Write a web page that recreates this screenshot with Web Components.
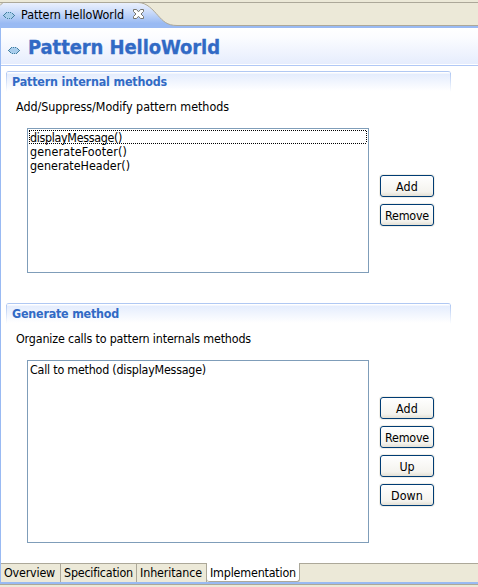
<!DOCTYPE html>
<html lang="en"><head><meta charset="utf-8"><title>Pattern HelloWorld</title>
<style>html,body{margin:0;width:478px;height:587px;overflow:hidden;background:#ece9d8;font:12.4px/14px "DejaVu Sans Condensed","DejaVu Sans","Noto Sans",sans-serif;color:#000}</style></head>
<body><pattern-editor></pattern-editor>
<script>
const define=(name,html,setup)=>customElements.define(name,class extends HTMLElement{
  connectedCallback(){
    if(this.shadowRoot)return;
    this.attachShadow({mode:'open'}).innerHTML=html;
    if(setup)setup(this,this.shadowRoot);
  }
});

// Text whose tracking is adjusted to fill the width given in "w".
define('fit-text','<style>:host{display:inline-block;white-space:nowrap;flex:none}span{display:inline-block}</style><span><slot></slot></span>',(el,r)=>{
  const s=r.querySelector('span'),w=+el.getAttribute('w');
  const n=r.querySelector('slot').assignedNodes({flatten:true}).map(t=>t.textContent).join('').length;
  s.style.letterSpacing=((w-s.getBoundingClientRect().width)/n).toFixed(3)+'px';
  el.style.width=w+'px';
});

define('pattern-icon',`<style>:host{display:block;width:12px;height:7px;flex:none}svg{display:block}</style>
<svg width="12" height="7" viewBox="0 0 12 7" shape-rendering="crispEdges"><path d="M3 0h6v1h1v1h1v1h1v1h-1v1h-1v1h-1v1h-6v-1h-1v-1h-1v-1h-1v-1h1v-1h1v-1h1z" fill="#a9cdec"/><path d="M3 .5h1M5 .5h1M7 .5h1M2 1.5h1M9 1.5h1M1 2.5h1M10 2.5h1M0 3.5h1M11 3.5h1M1 4.5h1M10 4.5h1M2 5.5h1M9 5.5h1M4 6.5h1M6 6.5h1M8 6.5h1" stroke="#437f9f"/></svg>`);

define('editor-tab',`<style>
:host{display:grid;height:28px;grid-template-columns:478px}
svg,.c{grid-area:1/1}svg{display:block}
.c{display:flex;align-items:flex-start}
pattern-icon{margin:12px 6px 0 3px}fit-text{margin-top:8px}.x{margin:9px 0 0 9px}
</style>
<svg width="478" height="28" viewBox="0 0 478 28"><defs><linearGradient id="g" x1="0" y1="3" x2="0" y2="27" gradientUnits="userSpaceOnUse"><stop offset="0" stop-color="#eaf0fd"/><stop offset=".3" stop-color="#d2e0fb"/><stop offset=".85" stop-color="#99baf3"/><stop offset="1" stop-color="#99baf3"/></linearGradient></defs>
<path d="M0 2.5H478" stroke="#aca899"/><rect y="26" width="478" height="2" fill="#99baf3"/>
<path d="M0 28V5L3 3H138C147 3 153 10 158 15.5S167 25.5 177 25.5V28Z" fill="url(#g)"/>
<path d="M0 5.5L3 2.5H138C147 2.5 153 10 158 15.5S167 25.5 177 25.5H478" fill="none" stroke="#aca899"/></svg>
<div class="c"><pattern-icon></pattern-icon><fit-text w="103"><slot></slot></fit-text>
<svg class="x" width="11" height="11" viewBox="0 0 11 11"><path d="M.5.5H3.5L5.5 2.8L7.5.5H10.5V2.5L8 5L10.5 7.5V9.5H7.5L5.5 7.3L3.5 9.5H.5V7.5L3 5L.5 2.5Z" fill="#fff" stroke="#77766f"/></svg></div>`);

define('form-heading',`<style>
:host{display:flex;box-sizing:border-box;height:38px;background:linear-gradient(#fff 0,#fbfcff 25%,#e6edfd 36px,#fff 36px,#fff 37px,#b0c8f6 37px)}
pattern-icon{margin:19px 8px 0 7px}fit-text{font-weight:bold;font-size:20px;line-height:24px;color:#316ac5;margin-top:7px;-webkit-text-stroke:.3px #316ac5}
</style><pattern-icon></pattern-icon><fit-text w="192"><slot></slot></fit-text>`);

define('form-section',`<style>
:host{display:block;height:232px;margin-left:5px}
header{position:relative;width:445px;height:20px;box-sizing:border-box;border-radius:3px 3px 0 0;border-top:1px solid #b0c8f3;background:linear-gradient(#fff 1px,#e5edfd 2px,#fff 19px);display:flex;padding:3px 0 0 6px;color:#316ac5;font-weight:bold}
header::before,header::after{content:"";position:absolute;top:1px;width:1px;height:19px;background:linear-gradient(#b0c8f3,#fff)}
header::before{left:0}header::after{right:0}
.d{display:flex;padding:9px 0 0 10px;height:37px;box-sizing:border-box}
.b{display:flex;padding-left:21px;gap:11px}
</style><header><slot name="title"></slot></header><div class="d"><slot name="desc"></slot></div><div class="b"><slot></slot></div>`);

define('list-box',`<style>:host{display:block;box-sizing:border-box;width:342px;border:1px solid #7f9db9;background:#fff;padding:1px;flex:none}</style><slot></slot>`);
define('list-item',`<style>:host{display:flex;box-sizing:border-box;height:14px;padding-left:1px;line-height:14px;position:relative}
svg{position:absolute;left:0;top:0}::slotted(fit-text){margin-top:1px}</style><slot></slot>`,(el,r)=>{
  if(el.hasAttribute('focused'))r.innerHTML+='<svg width="338" height="14"><path d="M0 .5H338M0 13.5H338M.5 1V13M337.5 1V13" stroke="#000" stroke-dasharray="1 1" shape-rendering="crispEdges" fill="none"/></svg>';
});
define('button-column','<style>:host{display:flex;flex-direction:column;gap:7px}</style><slot></slot>');
define('push-button',`<style>:host{display:block}button{display:flex;justify-content:center;align-items:center;box-sizing:border-box;width:54px;height:22px;border:1px solid #003c74;border-radius:3px;background:linear-gradient(#fff,#f4f3ee 80%,#e4e0d4);padding:1px 0 0;font:inherit;color:#000;box-shadow:0 0 0 1px #f1efe8}</style><button><slot></slot></button>`);

define('page-tabs',`<style>
:host{display:flex;height:19px;box-sizing:border-box;background:linear-gradient(#aca899 1px,#ece9d8 1px)}
</style><slot></slot>`);
define('page-tab',`<style>:host{display:flex;box-sizing:border-box;height:19px;padding:3px 0 0 3px;border-right:1px solid #aca899;flex:none}
:host([active]){background:#fff;height:19px;border-bottom:1px solid #aca899;border-radius:0 0 3px 3px}</style><slot></slot>`);

define('pattern-editor',`<style>
:host{display:flex;flex-direction:column;width:478px;height:587px}
main{box-sizing:border-box;height:556px;background:#fff;border-left:1px solid #99baf3;border-bottom:2px solid #99baf3;display:flex;flex-direction:column;flex:none}
.s{padding-top:5px;height:497px;box-sizing:border-box}
footer{height:3px;box-sizing:border-box;border-top:1px solid #aca899}
</style>
<editor-tab>Pattern HelloWorld</editor-tab>
<main><form-heading>Pattern HelloWorld</form-heading>
<div class="s">
<form-section><fit-text slot="title" w="155">Pattern internal methods</fit-text><fit-text slot="desc" w="213">Add/Suppress/Modify pattern methods</fit-text>
<list-box style="height:145px"><list-item focused><fit-text w="92">displayMessage()</fit-text></list-item><list-item><fit-text w="97">generateFooter()</fit-text></list-item><list-item><fit-text w="100">generateHeader()</fit-text></list-item></list-box>
<button-column style="padding-top:47px"><push-button><fit-text w="22">Add</fit-text></push-button><push-button><fit-text w="44">Remove</fit-text></push-button></button-column></form-section>
<form-section><fit-text slot="title" w="107">Generate method</fit-text><fit-text slot="desc" w="235">Organize calls to pattern internals methods</fit-text>
<list-box style="height:183px"><list-item><fit-text w="176">Call to method (displayMessage)</fit-text></list-item></list-box>
<button-column style="padding-top:37px"><push-button><fit-text w="22">Add</fit-text></push-button><push-button><fit-text w="44">Remove</fit-text></push-button><push-button><fit-text w="15">Up</fit-text></push-button><push-button><fit-text w="32">Down</fit-text></push-button></button-column></form-section>
</div>
<page-tabs><page-tab style="width:60px"><fit-text w="51">Overview</fit-text></page-tab><page-tab style="width:76px"><fit-text w="69">Specification</fit-text></page-tab><page-tab style="width:70px"><fit-text w="62">Inheritance</fit-text></page-tab><page-tab active style="width:93px"><fit-text w="86">Implementation</fit-text></page-tab></page-tabs>
</main><footer></footer>`);
</script></body></html>
